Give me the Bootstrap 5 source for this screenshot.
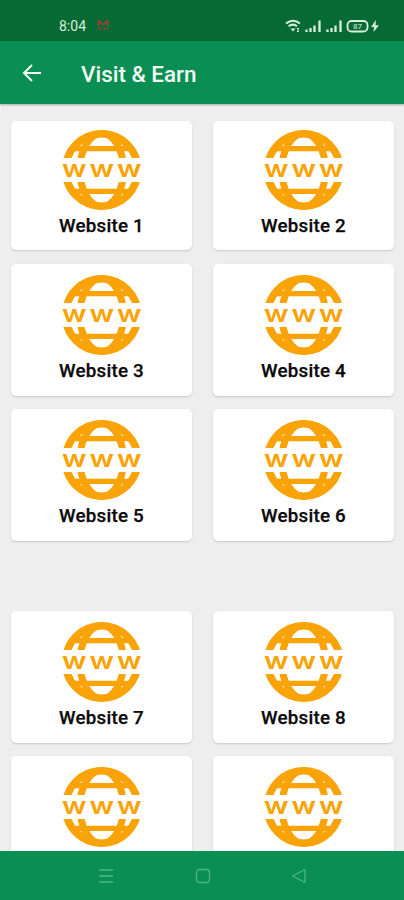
<!DOCTYPE html>
<html lang="en">
<head>
<meta charset="utf-8">
<meta name="viewport" content="width=device-width, initial-scale=1">
<title>Visit &amp; Earn</title>
<link href="https://cdn.jsdelivr.net/npm/bootstrap@5.3.0/dist/css/bootstrap.min.css" rel="stylesheet">
<style>
body { font-family: Roboto, "Noto Sans", sans-serif; background: #eee; }
.screen { height: 900px; }
.status { height: 41px; background: #056a33; color: #d9eedd; padding: 11px 24px 0 59px; }
.status svg { margin-top: 8px; }
.clock { font-size: 14px; line-height: 31px; }
.toolbar { height: 63px; background: #0a8e53; padding-left: 22px; box-shadow: 0 1px 2px rgba(0,0,0,.3); z-index: 1; }
.toolbar h1 { font-size: 22.4px; font-weight: 500; margin: 4px 0 0 39px; color: #f2fbf5; }
.feed { padding: 17px 10px 0 11px; min-height: 0; }
.tiles { display: grid; grid-template-columns: 181px 181px; justify-content: space-between; row-gap: 13px; }
.tiles + .tiles { margin-top: 70px; }
.site { height: 132px; border-radius: 5px; padding-top: 11px; box-shadow: 0 1px 2px rgba(0,0,0,.16); }
.site.first { height: 129px; padding-top: 9px; margin-bottom: 1px; }
.site svg { width: 80px; height: 80px; }
.site span { font-size: 18.8px; letter-spacing: .2px; font-weight: 500; line-height: 22px; margin-top: 5px; color: #0a0a0a; -webkit-text-stroke: .25px #0a0a0a; }
.bottombar { height: 49px; background: #0a8e53; padding: 0 97px 0 98px; z-index: 1; }
</style>
<script src="https://cdn.jsdelivr.net/npm/bootstrap@5.3.0/dist/js/bootstrap.bundle.min.js"></script>
</head>
<body>
<svg width="0" height="0" class="position-absolute" aria-hidden="true">
  <defs>
    <clipPath id="halves"><path d="M0 0H80V28H0ZM0 52H80V80H0Z"/></clipPath>
    <symbol id="globe" viewBox="0 0 80 80">
      <g clip-path="url(#halves)" fill="none" stroke="#faa306">
        <circle cx="39.700" cy="40" r="36.200" stroke-width="7.600"/>
        <ellipse cx="39.700" cy="40" rx="21.800" ry="36.500" stroke-width="7"/>
        <path d="M8 18.600H72M8 61.400H72" stroke-width="5.400"/>
      </g>
      <g font-family="Inter, sans-serif" font-weight="600" font-size="23.500" fill="#faa306">
        <text x="0" y="46.700" textLength="24.500" lengthAdjust="spacingAndGlyphs">w</text>
        <text x="27.500" y="46.700" textLength="24.500" lengthAdjust="spacingAndGlyphs">w</text>
        <text x="55" y="46.700" textLength="24.500" lengthAdjust="spacingAndGlyphs">w</text>
      </g>
    </symbol>
  </defs>
</svg>
<div class="screen d-flex flex-column overflow-hidden">
  <div class="status d-flex align-items-start flex-shrink-0">
    <span class="clock">8:04</span>
    <svg class="ms-2" width="18" height="12" viewBox="0 0 18 12" fill="none" stroke="#a13c3a" stroke-width="1.700"><path d="M4.500 1V7M4.500 1.500L9 6L13.500 1.500V7M4 9.500H8M10 9.500H14"/></svg>
    <svg class="ms-auto" width="95" height="15" viewBox="0 0 95 15" fill="none" stroke="#d9eedd">
      <path d="M1 4.500Q8 -1 15 4.500M3.500 7.300Q8 4 12 7.300" stroke-width="2"/>
      <path d="M5.500 9.500H10.500L8 12.500ZM12 9h2v1.500h-2zM12 11.500h2v1.500h-2z" fill="#d9eedd" stroke="none"/>
      <path d="M21.500 13V10.500M25.500 13V9M29.500 13V6.500M34.500 13V1.500M42.500 13V10.500M46.500 13V9M50.500 13V6.500M55.500 13V1.500" stroke-width="2.300"/>
      <rect x="62.500" y="2" width="20" height="10.500" rx="4" stroke-width="1.800"/>
      <text x="72.500" y="10.200" text-anchor="middle" font-family="Roboto, sans-serif" font-weight="700" font-size="8" fill="#a5d0b2" stroke="none">87</text>
      <path d="M91 1L86 8H89L88.500 13L94 6.300H90.500Z" fill="#d9eedd" stroke="none"/>
    </svg>
  </div>
  <header class="toolbar d-flex align-items-center flex-shrink-0 position-relative">
    <svg width="20" height="18" viewBox="0 0 20 18" fill="none" stroke="#f2fbf5" stroke-width="2"><path d="M19 9H2.500M10 1L2 9L10 17"/></svg>
    <h1>Visit &amp; Earn</h1>
  </header>
  <main class="feed flex-grow-1 overflow-hidden">
    <div class="tiles">
      <div class="site first bg-white d-flex flex-column align-items-center"><svg><use href="#globe"/></svg><span>Website 1</span></div>
      <div class="site first bg-white d-flex flex-column align-items-center"><svg><use href="#globe"/></svg><span>Website 2</span></div>
      <div class="site bg-white d-flex flex-column align-items-center"><svg><use href="#globe"/></svg><span>Website 3</span></div>
      <div class="site bg-white d-flex flex-column align-items-center"><svg><use href="#globe"/></svg><span>Website 4</span></div>
      <div class="site bg-white d-flex flex-column align-items-center"><svg><use href="#globe"/></svg><span>Website 5</span></div>
      <div class="site bg-white d-flex flex-column align-items-center"><svg><use href="#globe"/></svg><span>Website 6</span></div>
    </div>
    <div class="tiles">
      <div class="site bg-white d-flex flex-column align-items-center"><svg><use href="#globe"/></svg><span>Website 7</span></div>
      <div class="site bg-white d-flex flex-column align-items-center"><svg><use href="#globe"/></svg><span>Website 8</span></div>
      <div class="site bg-white d-flex flex-column align-items-center"><svg><use href="#globe"/></svg></div>
      <div class="site bg-white d-flex flex-column align-items-center"><svg><use href="#globe"/></svg></div>
    </div>
  </main>
  <nav class="bottombar d-flex align-items-center justify-content-between flex-shrink-0 position-relative">
    <svg width="16" height="16" viewBox="0 0 16 16" stroke="#50b482" stroke-width="1.400"><path d="M1 2H15M1 8H15M1 14H15"/></svg>
    <svg width="16" height="16" viewBox="0 0 16 16" fill="none" stroke="#50b482" stroke-width="1.300"><rect x="1.500" y="1.500" width="13" height="13" rx="3"/></svg>
    <svg width="16" height="16" viewBox="0 0 16 16" fill="none" stroke="#50b482" stroke-width="1.300" stroke-linejoin="round"><path d="M14 1.500V14.500L1.500 8Z"/></svg>
  </nav>
</div>
</body>
</html>
